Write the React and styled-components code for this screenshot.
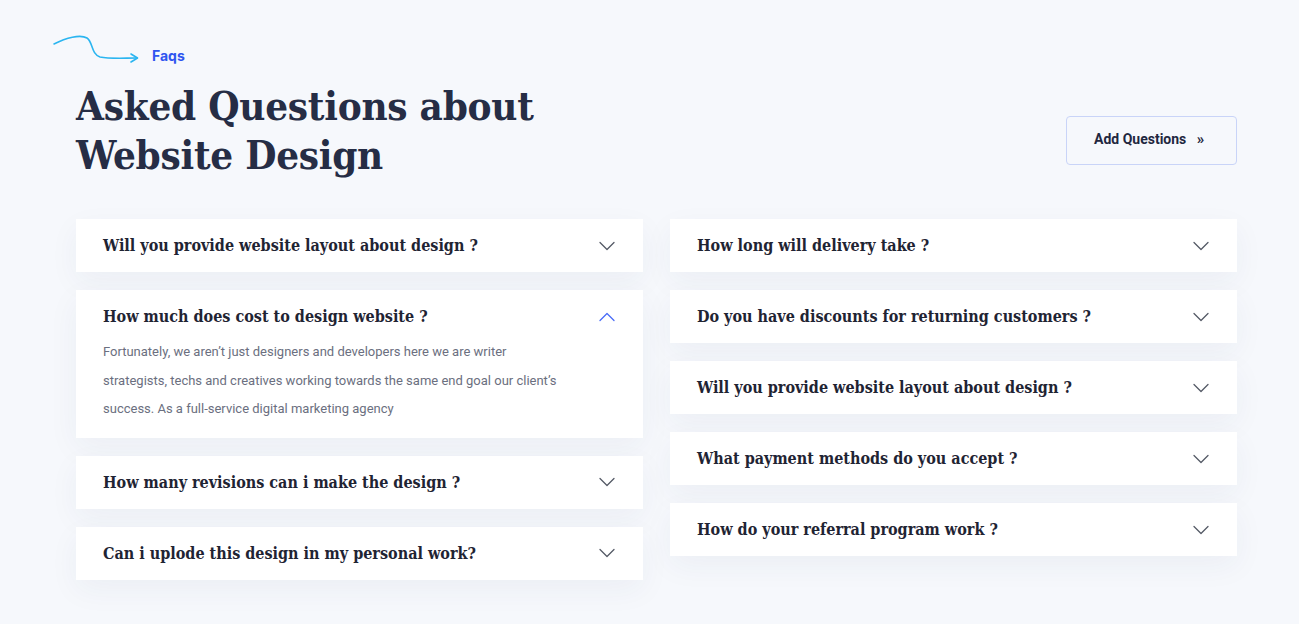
import React, { useState } from 'react';
import styled, { createGlobalStyle } from 'styled-components';
import { ChevronDown, ChevronUp } from 'lucide-react';

const GlobalStyle = createGlobalStyle`
  * { box-sizing: border-box; }
  body {
    margin: 0;
    background: #f6f8fc;
    font-family: Roboto, 'Liberation Sans', sans-serif;
  }
`;

const leftItems = [
  { q: 'Will you provide website layout about design ?' },
  {
    q: 'How much does cost to design website ?',
    a: 'Fortunately, we aren’t just designers and developers here we are writer strategists, techs and creatives working towards the same end goal our client’s success. As a full-service digital marketing agency',
    open: true,
  },
  { q: 'How many revisions can i make the design ?' },
  { q: 'Can i uplode this design in my personal work?' },
];

const rightItems = [
  { q: 'How long will delivery take ?' },
  { q: 'Do you have discounts for returning customers ?' },
  { q: 'Will you provide website layout about design ?' },
  { q: 'What payment methods do you accept ?' },
  { q: 'How do your referral program work ?' },
];

const FaqItem = ({ item }) => {
  const [open, setOpen] = useState(!!item.open);
  return (
    <Card>
      <CardHead onClick={() => setOpen(!open)}>
        <Question>{item.q}</Question>
        <Chevron $open={open}>
          {open ? (
            <ChevronUp size={28} strokeWidth={1.1} />
          ) : (
            <ChevronDown size={28} strokeWidth={1.1} />
          )}
        </Chevron>
      </CardHead>
      {open && item.a && <Answer>{item.a}</Answer>}
    </Card>
  );
};

const App = () => {
  return (
    <>
      <GlobalStyle />
      <Section>
        <Header>
          <div>
            <Tag>
              <svg width="88" height="32" viewBox="0 0 88 32" fill="none">
                <path
                  d="M2 12 C 14 6, 28 2, 35 6 C 41 10, 39 22, 48 25 C 58 27, 72 26, 85 26"
                  stroke="#2bb5f0"
                  strokeWidth="1.6"
                  strokeLinecap="round"
                />
                <path
                  d="M79 22 L 85.5 26 L 79 30"
                  stroke="#2bb5f0"
                  strokeWidth="1.6"
                  strokeLinecap="round"
                  strokeLinejoin="round"
                />
              </svg>
              <TagText>Faqs</TagText>
            </Tag>
            <Title>
              Asked Questions about
              <br />
              Website Design
            </Title>
          </div>
          <AddButton>
            Add Questions <span>»</span>
          </AddButton>
        </Header>
        <Columns>
          <Column>
            {leftItems.map((item, i) => (
              <FaqItem key={i} item={item} />
            ))}
          </Column>
          <Column>
            {rightItems.map((item, i) => (
              <FaqItem key={i} item={item} />
            ))}
          </Column>
        </Columns>
      </Section>
    </>
  );
};

const serif = `'DejaVu Serif Condensed', 'DejaVu Serif', 'Liberation Serif', serif`;

const Section = styled.main`
  width: 1161px;
  margin: 0 0 0 76px;
  padding-top: 32px;
  padding-bottom: 43px;
`;

const Header = styled.div`
  display: flex;
  justify-content: space-between;
  align-items: flex-start;
`;

const Tag = styled.div`
  display: flex;
  align-items: center;
  margin-left: -24px;
  height: 34px;
  svg {
    margin-top: -2px;
  }
`;

const TagText = styled.span`
  margin-left: 12px;
  font-family: Inter, Roboto, sans-serif;
  font-weight: 700;
  font-size: 14px;
  color: #2f55f0;
  margin-top: 12px;
`;

const Title = styled.h1`
  margin: 15px 0 0;
  font-family: ${serif};
  font-stretch: condensed;
  font-weight: 700;
  font-size: 40px;
  line-height: 49px;
  color: #262d45;
  letter-spacing: -0.25px;
`;

const AddButton = styled.button`
  margin-top: 84px;
  width: 171px;
  height: 49px;
  border: 1px solid #c9d4f8;
  border-radius: 4px;
  background: transparent;
  padding: 0 0 3px 27px;
  font-family: Roboto, sans-serif;
  font-weight: 700;
  font-size: 14px;
  color: #1f2740;
  cursor: pointer;
  text-align: left;
  span {
    margin-left: 7px;
    font-size: 15px;
  }
`;

const Columns = styled.div`
  margin-top: 40px;
  display: grid;
  grid-template-columns: 567px 567px;
  column-gap: 27px;
  align-items: start;
`;

const Column = styled.div`
  display: flex;
  flex-direction: column;
  gap: 18px;
`;

const Card = styled.div`
  background: #fff;
  box-shadow: 0 10px 30px rgba(40, 50, 90, 0.05);
  padding: 0 22px 0 27px;
`;

const CardHead = styled.div`
  display: flex;
  justify-content: space-between;
  align-items: center;
  height: 53px;
  cursor: pointer;
`;

const Question = styled.span`
  font-family: ${serif};
  font-stretch: condensed;
  font-weight: 700;
  font-size: 16px;
  color: #1f2433;
`;

const Chevron = styled.span`
  display: flex;
  color: ${(p) => (p.$open ? '#4a6cf7' : '#555a66')};
`;

const Answer = styled.p`
  margin: -5px 0 0;
  padding: 0 55px 14px 0;
  font-family: Roboto, sans-serif;
  font-size: 13px;
  line-height: 28.5px;
  color: #6b6f80;
`;

export default App;
